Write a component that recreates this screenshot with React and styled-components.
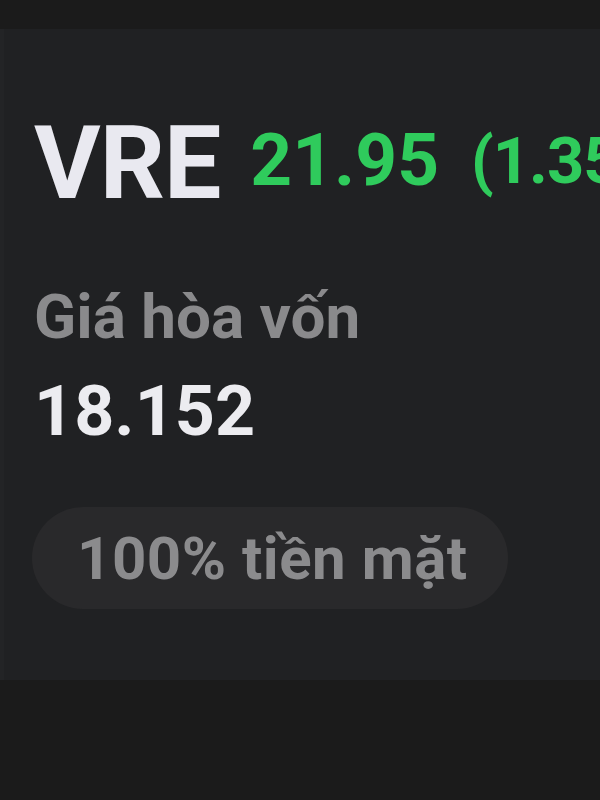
import React from 'react';
import styled, { createGlobalStyle } from 'styled-components';

const GlobalStyle = createGlobalStyle`
  html, body {
    margin: 0;
    padding: 0;
    background: #1b1b1b;
    font-family: Roboto, 'Noto Sans', sans-serif;
  }
`;

const Page = styled.div`
  width: 600px;
  height: 800px;
  overflow: hidden;
  background: #1b1b1b;
  padding-top: 29px;
  box-sizing: border-box;
`;

const Card = styled.div`
  height: 651px;
  background: #202123;
  border-left: 4px solid #232426;
  padding: 83px 0 0 30px;
  box-sizing: border-box;
  display: flex;
  flex-direction: column;
  overflow: hidden;
`;

const Header = styled.div`
  display: flex;
  align-items: flex-start;
  white-space: nowrap;
`;

const Ticker = styled.span`
  font-size: 102px;
  font-weight: 700;
  color: #e9e9f0;
  letter-spacing: -1px;
  line-height: 1;
`;

const Price = styled.span`
  font-size: ${p => p.$size}px;
  font-weight: 700;
  color: #2fcb5c;
  letter-spacing: ${p => p.$track || 0}px;
  margin-top: ${p => p.$top}px;
  margin-left: ${p => p.$gap}px;
  line-height: 1;
`;

const Label = styled.div`
  font-size: 62px;
  font-weight: 700;
  color: #8a8a8c;
  margin-top: 72px;
  line-height: 1;
`;

const Value = styled.div`
  font-size: 70px;
  font-weight: 700;
  color: #ececf0;
  margin-top: 28px;
  line-height: 1;
`;

const Pill = styled.div`
  align-self: flex-start;
  margin-top: 61px;
  margin-left: -2px;
  height: 102px;
  padding: 0 40px 0 45px;
  border-radius: 51px;
  background: #29292b;
  display: flex;
  align-items: center;
  font-size: 60px;
  font-weight: 700;
  letter-spacing: 0.5px;
  color: #8b8b8d;
  white-space: nowrap;
`;

export default function App() {
  return (
    <>
      <GlobalStyle />
      <Page>
        <Card>
          <Header>
            <Ticker>VRE</Ticker>
            <Price $size={73} $top={12} $gap={30}>21.95</Price>
            <Price $size={65} $top={17} $gap={32} $track={-1}>(1.35%)</Price>
          </Header>
          <Label>Giá hòa vốn</Label>
          <Value>18.152</Value>
          <Pill>100% tiền mặt</Pill>
        </Card>
      </Page>
    </>
  );
}
